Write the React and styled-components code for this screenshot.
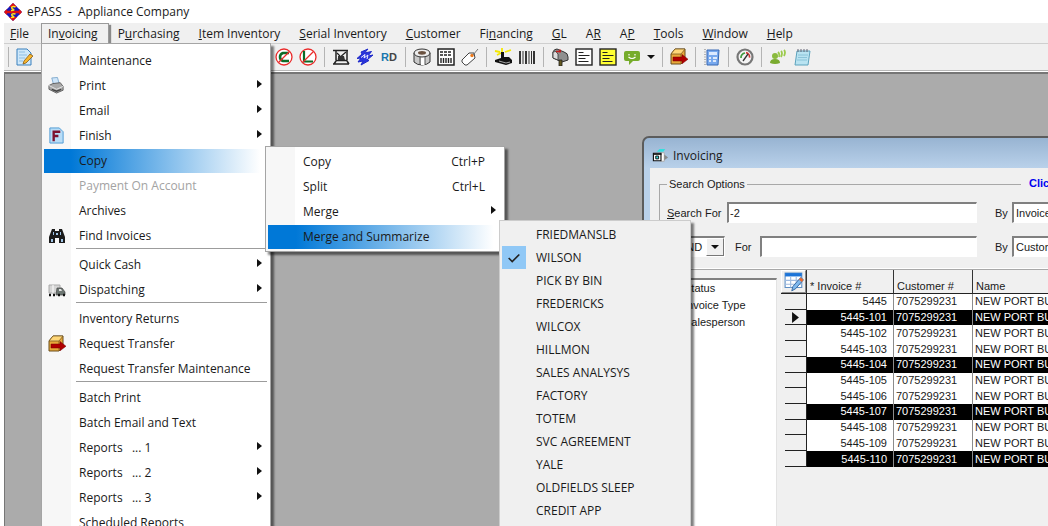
import React from "react";
import styled, { createGlobalStyle, css } from "styled-components";

const UI = `"Open Sans", "Noto Sans", sans-serif`;
const CLASSIC = `"Liberation Sans", Arial, sans-serif`;

const Global = createGlobalStyle`
  *, *::before, *::after { box-sizing: border-box; }
  html, body, #root { height: 100%; margin: 0; }
  body { overflow: hidden; background: #fff; color: #1a1a1a; font: 12px/16px ${UI}; }
  button, input, select { font: inherit; color: inherit; margin: 0; }
  ul { list-style: none; margin: 0; padding: 0; }
`;

const Shell = styled.div`
  display: flex;
  flex-direction: column;
  height: 100%;
  padding-left: 4px;
  overflow: hidden;
`;

const TitleBar = styled.header`
  display: flex;
  align-items: center;
  gap: 5px;
  height: 23px;
  font-size: 12px;
  white-space: pre;
`;

/* ---------- menu bar ---------- */
const MenuBar = styled.nav`
  display: flex;
  height: 21px;
  background: #f0f0f0;
  border-bottom: 1px solid #cfcfcf;
`;

const MenuSlot = styled.div`
  position: relative;
  display: flex;
`;

const MenuTitle = styled.button`
  height: 21px;
  padding: ${(p) => (p.$first ? "0 11px 0 5px" : "0 9px 0 8px")};
  border: 1px solid transparent;
  background: transparent;
  white-space: nowrap;
  ${(p) =>
    p.$open &&
    css`
      padding: 0 10px 0 6px;
      border-color: #9a9a9a;
      border-bottom: 0;
      box-shadow: 2px 2px 1px #8a8a8a;
    `}
`;

const Dropdown = styled.ul`
  position: absolute;
  z-index: 2;
  top: 20px;
  left: 0;
  width: 230px;
  padding: 4px 3px 4px 2px;
  border: 1px solid #a5a5a5;
  background: linear-gradient(90deg, #f7f7f7 29px, #fff 29px);
  box-shadow: 3px 3px 2px rgba(0, 0, 0, 0.5);
`;

const Flyout = styled(Dropdown)`
  z-index: 3;
  top: 123px;
  left: 224px;
  width: 240px;
  padding: 2px 3px 2px 2px;
`;

const CheckFlyout = styled(Dropdown)`
  z-index: 4;
  top: 197px;
  left: 458px;
  width: 192px;
  padding: 2px 2px 12px;
  border-color: #ccc;
  background: #f0f0f0;
`;

const Entry = styled.button`
  display: grid;
  grid-template-columns: 35px 1fr auto 10px;
  align-items: center;
  width: 100%;
  height: 25px;
  padding: 0;
  border: 0;
  background: transparent;
  text-align: left;
  white-space: pre;
  color: ${(p) => (p.disabled ? "#a3a3a3" : "#1a1a1a")};
  > svg { margin-bottom: 4px; }
  ${(p) =>
    p.$active &&
    css`
      background: linear-gradient(90deg, #0078d7 12%, #fff 97%) 0 1px / 100% 24px no-repeat;
    `}
`;

const EntryIcon = styled.span`
  display: flex;
  padding-left: 4px;
`;

const Shortcut = styled.span`
  padding-right: 6px;
`;

const Rule = styled.li`
  height: 4px;
  margin-left: 32px;
  border-top: 1px solid #9c9c9c;
`;

const CheckEntry = styled.button`
  display: grid;
  grid-template-columns: 24px 1fr;
  column-gap: 10px;
  align-items: center;
  width: 100%;
  height: 23px;
  padding: 0;
  border: 0;
  background: transparent;
  text-align: left;
`;

const CheckMark = styled.span`
  display: grid;
  place-items: center;
  height: 23px;
  background: ${(p) => (p.$on ? "#90c8f6" : "transparent")};
`;

/* ---------- tool bar ---------- */
const ToolBar = styled.div`
  display: flex;
  align-items: center;
  height: 27px;
  background: #f0f0f0;
  border-bottom: 1px solid #b8b8b8;
`;

const ToolGroup = styled.div`
  display: flex;
  width: ${(p) => (p.$lead ? "259px" : "auto")};
`;

const ToolButton = styled.button`
  display: grid;
  place-items: center;
  width: ${(p) => (p.$narrow ? "14px" : "24px")};
  height: 24px;
  padding: 0;
  border: 0;
  background: transparent;
`;

const ToolRule = styled.span`
  width: 1px;
  height: 20px;
  margin: 0 4px;
  background: #b4b4b4;
`;

const RD = styled.span`
  font: bold 11px/16px ${CLASSIC};
  color: #444;
  b { color: #1a76ae; }
`;

/* ---------- workspace and document window ---------- */
const Workspace = styled.main`
  position: relative;
  flex: 1;
  margin-top: 1px;
  overflow: hidden;
  background: #ababab;
  border-top: 2px solid #767676;
  border-left: 1px solid #767676;
`;

const DocWindow = styled.section`
  position: absolute;
  top: 62px;
  left: 637px;
  right: -160px;
  bottom: -60px;
  display: flex;
  flex-direction: column;
  padding-left: 6px;
  border: 2px solid #5c5c5c;
  border-radius: 7px 7px 0 0;
  background: linear-gradient(#98b4d2, #b9d1ea 30px);
  font: 11px/14px ${CLASSIC};
`;

const DocTitle = styled.h1`
  display: flex;
  align-items: center;
  gap: 4px;
  height: 30px;
  margin: 0;
  padding: 6px 0 0 2px;
  font: 12px/16px ${UI};
`;

const DocBody = styled.div`
  flex: 1;
  display: flex;
  flex-direction: column;
  padding: 9px 0 0 9px;
  background: #f0f0f0;
`;

const SearchBox = styled.fieldset`
  position: relative;
  display: flex;
  flex-direction: column;
  gap: 13px;
  min-width: 0;
  margin: 0 12px 0 0;
  padding: 11px 0 12px 7px;
  border: 1px solid #a8a8a8;
  box-shadow: inset 0 -1px 0 #fff;
  legend {
    margin-left: 0;
    padding: 0 2px;
  }
`;

const HelpLink = styled.a`
  position: absolute;
  top: -15px;
  left: 361px;
  padding: 0 8px;
  background: #f0f0f0;
  color: #0000f0;
  font-weight: bold;
  text-decoration: none;
`;

const SearchRow = styled.div`
  display: flex;
  align-items: center;
  height: 21px;
`;

const Caption = styled.label`
  width: ${(p) => p.$width};
  padding-left: ${(p) => p.$inset || "0"};
  white-space: nowrap;
`;

const sunken = css`
  height: 21px;
  border: 1px solid;
  border-width: 2px 1px 1px 2px;
  border-color: #808080 #fff #fff #808080;
  border-radius: 0;
  background: #fff;
`;

const TextBox = styled.input`
  ${sunken}
  width: ${(p) => p.$width};
  padding: 0 1px;
  outline: 0;
`;

const Combo = styled.span`
  ${sunken}
  display: flex;
  width: ${(p) => p.$width};
  margin-left: ${(p) => p.$inset || "0"};
  select {
    flex: 1;
    min-width: 0;
    padding: 0 2px;
    border: 0;
    background: transparent;
    appearance: none;
    outline: 0;
  }
`;

const ComboArrow = styled.span`
  display: grid;
  place-items: center;
  width: 18px;
  border: 1px solid;
  border-color: #fff #777 #777 #fff;
  background: #f0f0f0;
  pointer-events: none;
`;

const Results = styled.div`
  flex: 1;
  display: flex;
  align-items: flex-start;
  gap: 4px;
`;

const FilterList = styled.ul`
  align-self: stretch;
  width: 118px;
  margin-top: 8px;
  padding-left: 25px;
  border-top: 2px solid #808080;
  border-right: 1px solid #e3e3e3;
  background: #fff;
  line-height: 17px;
`;

const Grid = styled.table`
  flex: 1;
  height: 197px;
  border-collapse: separate;
  border-spacing: 0;
  table-layout: fixed;
  line-height: 13px;
  white-space: nowrap;
`;

const Head = styled.th`
  width: ${(p) => p.$width || "auto"};
  height: 24px;
  padding: 9px 3px 0;
  border-bottom: 1px solid #222;
  border-right: 1px solid #333;
  font-weight: normal;
  text-align: left;
`;

const CornerHead = styled(Head)`
  padding: 0;
`;

const CornerButton = styled.button`
  display: grid;
  place-items: center;
  width: 25px;
  height: 23px;
  padding: 0;
  border: 1px solid;
  border-color: #fff #8a8a8a #8a8a8a #fff;
  background: #f0f0f0;
`;

const Selector = styled.td`
  padding: 0 0 0 11px;
  border-right: 1px solid #222;
  background: linear-gradient(#222, #222) 4px 100% / 100% 1px no-repeat;
  line-height: 8px;
`;

const Cell = styled.td`
  padding: 0 ${(p) => (p.$right ? "6px" : "3px")} 0 2px;
  border-right: 1px solid #8c8c8c;
  background: ${(p) => (p.$marked ? "#000" : "#fff")};
  color: ${(p) => (p.$marked ? "#fff" : "#1a1a1a")};
  text-align: ${(p) => (p.$right ? "right" : "left")};
`;

/* ---------- drawings ---------- */
const Svg = ({ size = 18, children }) => (
  <svg width={size} height={size} viewBox="0 0 18 18" fill="none" aria-hidden="true">
    {children}
  </svg>
);

const Arrow = ({ large }) => (
  <svg width={large ? 7 : 5} height={large ? 11 : 8} viewBox="0 0 5 8" aria-hidden="true">
    <path d="M0 0 L5 4 L0 8Z" fill="#111" />
  </svg>
);

const Down = () => (
  <svg width="8" height="4" viewBox="0 0 8 4" aria-hidden="true">
    <path d="M0 0H8L4 4Z" fill="#111" />
  </svg>
);

const BoxArrow = () => (
  <Svg>
    <path d="M1 6 5 1h10v11l-4 4H1Z" fill="#e9a83a" stroke="#6b4e1c" />
    <path d="M1 6 5 1h10l-4 5Z" fill="#ffd778" stroke="#6b4e1c" strokeWidth=".7" />
    <path d="M11 6v10" stroke="#8e651c" />
    <path d="M3 9h9V6.5l6 4.7-6 4.6V13H3Z" fill="#b00000" stroke="#700" strokeWidth=".5" />
  </Svg>
);

const Lines = ({ fill }) => (
  <Svg>
    <rect x="1" y="1" width="16" height="16" fill={fill} stroke="#222" strokeWidth="1.4" />
    <path d="M3.500 4.500h5M3.500 7.500h11M3.500 10.500h7M3.500 13.500h10" stroke="#222" strokeWidth="1" />
  </Svg>
);

const icons = {
  app: (
    <Svg>
      <path d="M9 0 18 9 9 18 0 9Z" fill="#1818b8" />
      <path d="M9 0 13 4H5ZM0 9 3 6v6ZM18 9l-3-3v6ZM9 18l-4-4h8Z" fill="#e01010" />
      <path d="M1 9h16" stroke="#e01010" strokeWidth="2.600" />
      <path d="M11.500 4C8.500 2.800 6.500 4.500 8.500 5.800S10.500 7.500 7 7.500M11.500 11C8.500 10 6.500 11.500 8.500 12.800S10.500 14.500 7 14.500" stroke="#ffe11a" strokeWidth="1.500" />
    </Svg>
  ),
  edit: (
    <Svg>
      <path d="M1 1h10l4 4v12H1Z" fill="#cfe8fa" stroke="#3a80bd" />
      <path d="M3 4h6M3 7h8M3 10h6M3 13h4" stroke="#8fbfe4" />
      <path d="M14 6l3 2-7 7-3 1 1-3Z" fill="#f7b62e" stroke="#8a5b10" strokeWidth=".8" />
    </Svg>
  ),
  noC: (
    <Svg>
      <circle cx="9" cy="9" r="8" fill="#fff" stroke="#ea2a2a" strokeWidth="1.3" />
      <path d="M14 5H8Q5 6 5 9t3 4h6" stroke="#0b6b27" strokeWidth="2.6" />
      <path d="M3.500 14.500 14.500 3.500" stroke="#ea2a2a" strokeWidth="1.3" />
    </Svg>
  ),
  noL: (
    <Svg>
      <circle cx="9" cy="9" r="8" fill="#fff" stroke="#ea2a2a" strokeWidth="1.3" />
      <path d="M5 3v10.500h9" stroke="#0b6b27" strokeWidth="2.200" />
      <path d="M3.500 14.500 14.500 3.500" stroke="#ea2a2a" strokeWidth="1.3" />
    </Svg>
  ),
  easel: (
    <Svg>
      <path d="M1 2.500h15M4 2.500v10M15 2.500v10M4 12.500h11M1 16h16M4 13l-2 3M15 13l2 3" stroke="#222" strokeWidth="1.500" />
      <path d="M6 11 14 4M5 5l3 3" stroke="#222" strokeWidth="1.200" />
      <path d="M6 8h6l1 4H6Z" fill="#333" />
    </Svg>
  ),
  scribble: (
    <Svg>
      <path d="M5 4 12 1 8.500 5l7-1.500L12 8l5-1-6 5 2 .5L5 17l2-4-5 1 3-4-4 .5L6 6Z" fill="#2a35dd" stroke="#1d28c8" />
      <path d="M5 9.500 9 6.500 8 10l4-3-1 4" stroke="#eef" />
    </Svg>
  ),
  roll: (
    <Svg>
      <path d="M1 5v9q3 3 8 3t8-3V5Z" fill="#c9c9c9" stroke="#333" />
      <path d="M8 8h4v9H8Z" fill="#fff" />
      <ellipse cx="9" cy="5" rx="8" ry="4" fill="#ededed" stroke="#333" />
      <ellipse cx="9" cy="4.800" rx="4" ry="1.900" fill="#6b5240" />
      <path d="M7 9v8M12 9v8" stroke="#555" />
    </Svg>
  ),
  register: (
    <Svg>
      <rect x="1" y="1" width="16" height="16" fill="#fff" stroke="#222" strokeWidth="1.5" />
      <path d="M3 4h12M3 7h12" stroke="#222" strokeWidth="1.6" strokeDasharray="3 1" />
      <path d="M4 10v5M6.500 10v5M9 10v5M11.500 10v5M14 10v5" stroke="#222" strokeWidth="1.4" />
    </Svg>
  ),
  tag: (
    <Svg>
      <path d="M1 12 8 5h5l1 5-8 7H4l-3-3Z" fill="#fff" stroke="#444" />
      <circle cx="11" cy="7.500" r="1.700" fill="#ee7a1c" />
      <path d="M12 7 17 1" stroke="#777" />
    </Svg>
  ),
  scanner: (
    <Svg>
      <path d="M1 3l5 1M8 0v5M17 2l-6 2M3 7l4-2" stroke="#f4e800" strokeWidth="1.8" />
      <path d="M7 4h3v5h5l3 3v3l-6 2-11-3v-2l6-2Z" fill="#111" />
      <path d="M5 13l7 2 4-1" stroke="#ccc" strokeWidth=".8" />
    </Svg>
  ),
  barcode: (
    <Svg>
      <path d="M2 3v13M8 3v13M16 3v13" stroke="#222" strokeWidth="1.800" />
      <path d="M5 3v13M11 3v13M13.500 3v13" stroke="#333" />
    </Svg>
  ),
  mailbox: (
    <Svg>
      <path d="M2 4q1-3 4-3l7 3q4 1 4 5v3l-6 2-9-4Z" fill="#8f8f8f" stroke="#333" />
      <path d="M2 4q3-2 5 2v6l-5-2Z" fill="#ddd" stroke="#333" strokeWidth=".8" />
      <path d="M5 3.500h5M9 1.500v3" stroke="#c41c1c" strokeWidth="1.6" />
      <path d="M8 12h3v6H8Z" fill="#665a20" stroke="#222" strokeWidth=".8" />
    </Svg>
  ),
  formWhite: <Lines fill="#fff" />,
  formYellow: <Lines fill="#ffff33" />,
  chat: (
    <Svg>
      <path d="M3 3h12q2 0 2 2v6q0 2-2 2h-5l-4 4v-4H3q-2 0-2-2V5q0-2 2-2Z" fill="#76ac2b" />
      <path d="M6 6v1.500M12 6v1.500M5.500 9q3.500 3 7 0" stroke="#fff" strokeWidth="1.200" />
    </Svg>
  ),
  boxArrow: <BoxArrow />,
  planner: (
    <Svg>
      <path d="M4 2h12l-1 15H4Z" fill="#78a9ee" stroke="#3869b4" />
      <path d="M6 4h8v3H6Z" fill="#dbe9ff" />
      <path d="M6 10h2M10 10h4M6 13h2M10 13h3" stroke="#fff" strokeWidth="1.700" />
      <path d="M2 1v16" stroke="#777" strokeDasharray="1 1.500" />
    </Svg>
  ),
  gauge: (
    <Svg>
      <circle cx="9" cy="9" r="7.500" fill="#f4f4f4" stroke="#777" strokeWidth="2.200" />
      <path d="M5 10a4.500 4.500 0 0 1 4-5" stroke="#3f9b3f" strokeWidth="1.700" />
      <path d="M10 4.700a4.500 4.500 0 0 1 3.500 5" stroke="#d13434" strokeWidth="1.700" />
      <path d="M7 13 12 6" stroke="#333" strokeWidth="1.300" />
    </Svg>
  ),
  people: (
    <Svg>
      <circle cx="6" cy="8" r="3" fill="#8aba3d" />
      <path d="M1 15q0-4 5-4t5 4q-5 2-10 0Z" fill="#7aab2f" />
      <path d="M9 4q2 2 1 5M12 3q2 2 0 6M15 2q2 2 0 6" stroke="#9ccb4c" strokeWidth="1.800" />
    </Svg>
  ),
  notebook: (
    <Svg>
      <path d="M4 3h13l-2 14H2Z" fill="#b9e3f1" stroke="#5da3bd" />
      <path d="M5 7h10M5 9.500h9M4 12h10" stroke="#7fbdd3" strokeWidth=".8" />
      <path d="M5 1v3M8 1v3M11 1v3M14 1v3" stroke="#667" />
    </Svg>
  ),
  printer: (
    <Svg size={17}>
      <path d="M4 1l6-.5 2 7-6 1Z" fill="#cfe6fa" stroke="#6a9bc4" strokeWidth=".8" />
      <path d="M1 9 5 7l8-1 3 4v4l-7 3-8-4Z" fill="#a9a9a9" stroke="#555" strokeWidth=".9" />
      <path d="M1 9l8 4 7-3" stroke="#e5e5e5" />
      <path d="M4 13l5 2 5-2" stroke="#444" strokeWidth="1.400" />
    </Svg>
  ),
  finish: (
    <Svg size={17}>
      <path d="M2 1h10l4 4v12H2Z" fill="#b8ddf7" stroke="#4d9ad4" />
      <path d="M6 15V5h7M6 9.500h5" stroke="#7d1230" strokeWidth="2.500" />
    </Svg>
  ),
  find: (
    <Svg>
      <path d="M4 2h3v2h4V2h3l3 8v6h-6v-5H7v5H1v-6Z" fill="#1b1b1b" />
      <path d="M3 12h2v3H3ZM13 12h2v3h-2ZM5 5h1v3H5ZM12 5h1v3h-1ZM8 6h2v2H8Z" fill="#9fc4e6" />
    </Svg>
  ),
  truck: (
    <Svg>
      <path d="M1 4h11v8H1Z" fill="#d5d5d5" stroke="#aaa" />
      <path d="M5 4v8" stroke="#fff" />
      <path d="M9 7h5l3 4v3H8Z" fill="#6d7773" stroke="#444" strokeWidth=".7" />
      <path d="M11 8h2l1 2h-3Z" fill="#e2e2e2" />
      <path d="M1 14h2M5 14h2M10 14h2M15 14h2" stroke="#111" strokeWidth="2.500" />
    </Svg>
  ),
  form: (
    <Svg size={17}>
      <path d="M5 4 8 1h6l-2 3Z" fill="#35dede" />
      <path d="M9 5h4v9H9Z" fill="#fff" stroke="#aaa" />
      <path d="M13 7l4 3-4 3Z" fill="#888" />
      <path d="M1.500 5.500h8v8h-8Z" fill="#fff" stroke="#111" strokeWidth="1.200" />
      <path d="M1 6.500h9" stroke="#111" strokeWidth="1.500" />
      <path d="M4 8.500h3v3H4Z" fill="#35dede" stroke="#111" />
    </Svg>
  ),
  gridEdit: (
    <Svg size={20}>
      <path d="M1 1h15v13H1Z" fill="#fff" stroke="#5f8fc4" />
      <path d="M1 1h15v3H1Z" fill="#1c74d8" />
      <path d="M1 7.500h15M1 11h15M6 4v10M11 4v10" stroke="#9fbbe0" />
      <path d="M15 5l2.500 2-7 8-3.500 2 1-4Z" fill="#7fb9ee" stroke="#31619b" strokeWidth=".8" />
      <path d="M15 5l2.500 2-1.500 2-2.500-2Z" fill="#ee6a2c" />
    </Svg>
  ),
};

/* ---------- data ---------- */
const menus = [
  ["", "F", "ile"],
  ["In", "v", "oicing"],
  ["P", "u", "rchasing"],
  ["", "I", "tem Inventory"],
  ["", "S", "erial Inventory"],
  ["", "C", "ustomer"],
  ["Fi", "n", "ancing"],
  ["", "G", "L"],
  ["A", "R", ""],
  ["A", "P", ""],
  ["", "T", "ools"],
  ["", "W", "indow"],
  ["", "H", "elp"],
];

const invoicingMenu = [
  { label: "Maintenance" },
  { label: "Print", icon: "printer", sub: true },
  { label: "Email", sub: true },
  { label: "Finish", icon: "finish", sub: true },
  { label: "Copy", active: true },
  { label: "Payment On Account", disabled: true },
  { label: "Archives" },
  { label: "Find Invoices", icon: "find" },
  null,
  { label: "Quick Cash", sub: true },
  { label: "Dispatching", icon: "truck", sub: true },
  null,
  { label: "Inventory Returns" },
  { label: "Request Transfer", icon: "boxArrow" },
  { label: "Request Transfer Maintenance" },
  null,
  { label: "Batch Print" },
  { label: "Batch Email and Text" },
  { label: "Reports   ... 1", sub: true },
  { label: "Reports   ... 2", sub: true },
  { label: "Reports   ... 3", sub: true },
  { label: "Scheduled Reports" },
];

const copyMenu = [
  { label: "Copy", keys: "Ctrl+P" },
  { label: "Split", keys: "Ctrl+L" },
  { label: "Merge", sub: true },
  { label: "Merge and Summarize", active: true },
];

const companies = [
  "FRIEDMANSLB", "WILSON", "PICK BY BIN", "FREDERICKS", "WILCOX", "HILLMON",
  "SALES ANALYSYS", "FACTORY", "TOTEM", "SVC AGREEMENT", "YALE", "OLDFIELDS SLEEP", "CREDIT APP",
];

const tools = [
  ["noC", "noL"],
  ["easel", "scribble", "rd"],
  ["roll", "register", "tag"],
  ["scanner", "barcode"],
  ["mailbox", "formWhite", "formYellow", "chat", "more"],
  ["boxArrow"],
  ["planner"],
  ["gauge"],
  ["people", "notebook"],
];

const invoices = ["", "-101", "-102", "-103", "-104", "-105", "-106", "-107", "-108", "-109", "-110"];
const marked = ["-101", "-104", "-107", "-110"];

/* ---------- parts ---------- */
const MenuEntries = ({ items }) =>
  items.map((it, i) =>
    it ? (
      <li key={i}>
        <Entry $active={it.active} disabled={it.disabled}>
          <EntryIcon>{it.icon && icons[it.icon]}</EntryIcon>
          <span>{it.label}</span>
          <Shortcut>{it.keys}</Shortcut>
          {it.sub && <Arrow />}
        </Entry>
      </li>
    ) : (
      <Rule key={i} />
    )
  );

const Tool = ({ name }) => (
  <ToolButton $narrow={name === "more"} aria-label={name}>
    {name === "rd" ? <RD><b>R</b>D</RD> : name === "more" ? <Down /> : icons[name]}
  </ToolButton>
);

const Choice = ({ id, value, width, inset, arrow }) => (
  <Combo $width={width} $inset={inset}>
    <select id={id} aria-label={value} defaultValue={value}>
      <option>{value}</option>
    </select>
    {arrow && <ComboArrow><Down /></ComboArrow>}
  </Combo>
);

export default function App() {
  return (
    <>
      <Global />
      <Shell>
        <TitleBar>
          {icons.app}
          <span>{"ePASS  -  Appliance Company"}</span>
        </TitleBar>
        <MenuBar>
          {menus.map(([a, key, b], i) => (
            <MenuSlot key={i}>
              <MenuTitle $first={i === 0} $open={i === 1}>
                {a}<u>{key}</u>{b}
              </MenuTitle>
              {i === 1 && (
                <>
                  <Dropdown><MenuEntries items={invoicingMenu} /></Dropdown>
                  <Flyout><MenuEntries items={copyMenu} /></Flyout>
                  <CheckFlyout>
                    {companies.map((name) => (
                      <li key={name}>
                        <CheckEntry>
                          <CheckMark $on={name === "WILSON"}>
                            {name === "WILSON" && (
                              <Svg size={16}>
                                <path d="M3 9l4 4 8-8" stroke="#222" strokeWidth="1.800" />
                              </Svg>
                            )}
                          </CheckMark>
                          {name}
                        </CheckEntry>
                      </li>
                    ))}
                  </CheckFlyout>
                </>
              )}
            </MenuSlot>
          ))}
        </MenuBar>
        <ToolBar>
          <ToolRule />
          <ToolGroup $lead><Tool name="edit" /></ToolGroup>
          {tools.map((group, i) => (
            <React.Fragment key={i}>
              {i > 0 && <ToolRule />}
              <ToolGroup>{group.map((n) => <Tool key={n} name={n} />)}</ToolGroup>
            </React.Fragment>
          ))}
        </ToolBar>
        <Workspace>
          <DocWindow>
            <DocTitle>{icons.form}Invoicing</DocTitle>
            <DocBody>
              <SearchBox>
                <legend>Search Options</legend>
                <HelpLink href="#help">Click</HelpLink>
                <SearchRow>
                  <Caption htmlFor="term" $width="60px"><u>S</u>earch For</Caption>
                  <TextBox id="term" $width="250px" defaultValue="-2" />
                  <Caption htmlFor="by1" $width="35px" $inset="18px">By</Caption>
                  <Choice id="by1" value="Invoice #" width="150px" />
                </SearchRow>
                <SearchRow>
                  <Choice id="join" value="AND" width="50px" inset="8px" arrow />
                  <Caption htmlFor="term2" $width="35px" $inset="10px">For</Caption>
                  <TextBox id="term2" $width="217px" />
                  <Caption htmlFor="by2" $width="35px" $inset="18px">By</Caption>
                  <Choice id="by2" value="Customer #" width="150px" />
                </SearchRow>
              </SearchBox>
              <Results>
                <FilterList>
                  <li>Status</li>
                  <li>Invoice Type</li>
                  <li>Salesperson</li>
                </FilterList>
                <Grid>
                  <thead>
                    <tr>
                      <CornerHead $width="26px">
                        <CornerButton aria-label="Edit columns">{icons.gridEdit}</CornerButton>
                      </CornerHead>
                      <Head $width="87px">* Invoice #</Head>
                      <Head $width="79px">Customer #</Head>
                      <Head>Name</Head>
                    </tr>
                  </thead>
                  <tbody>
                    {invoices.map((n) => {
                      const on = marked.includes(n);
                      return (
                        <tr key={n}>
                          <Selector>{n === "-101" && <Arrow large />}</Selector>
                          <Cell $marked={on} $right>5445{n}</Cell>
                          <Cell $marked={on}>7075299231</Cell>
                          <Cell $marked={on}>NEW PORT BUILDERS</Cell>
                        </tr>
                      );
                    })}
                  </tbody>
                </Grid>
              </Results>
            </DocBody>
          </DocWindow>
        </Workspace>
      </Shell>
    </>
  );
}
